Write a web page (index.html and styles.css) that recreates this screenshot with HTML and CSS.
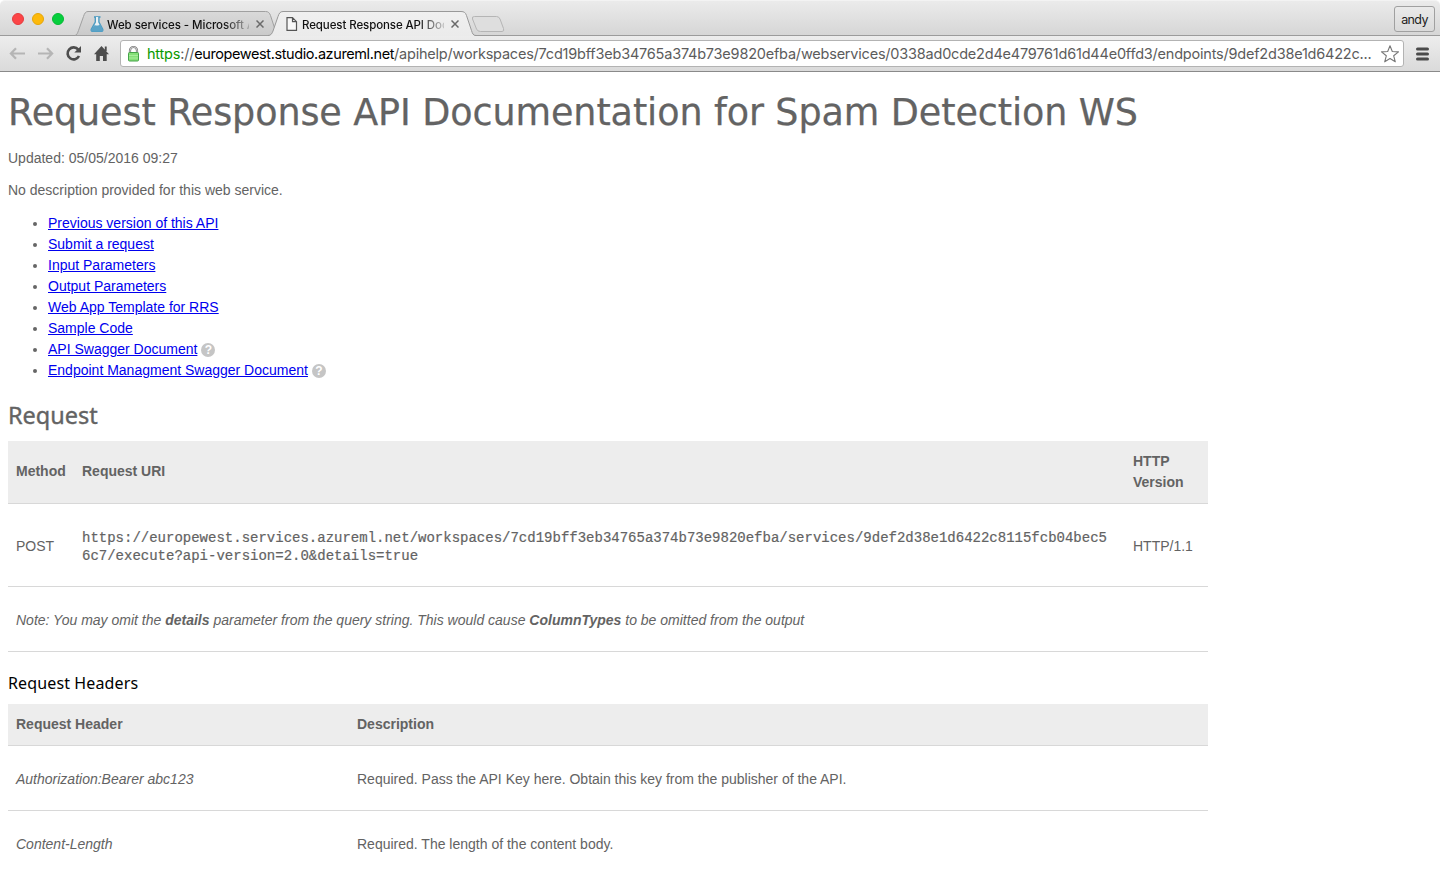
FILE: index.html
```html
<!DOCTYPE html>
<html lang="en">
<head>
<meta charset="utf-8">
<title>Request Response API Documentation</title>
<link rel="stylesheet" href="styles.css">
</head>
<body>
<header class="browser">
  <div class="tabstrip">
    <div class="lights"><i class="light red"></i><i class="light amber"></i><i class="light green"></i></div>
    <svg class="tab-shapes" width="440" height="36" viewBox="75 0 440 36">
      <defs>
        <linearGradient id="idle" x1="0" y1="0" x2="0" y2="1"><stop offset="0" stop-color="#d9d9d9"/><stop offset="1" stop-color="#cacaca"/></linearGradient>
        <linearGradient id="live" x1="0" y1="0" x2="0" y2="1"><stop offset="0" stop-color="#f0f0f0"/><stop offset="1" stop-color="#ebebeb"/></linearGradient>
      </defs>
      <path d="M75 35.5C77 35 77.500 33 78.500 30.500L83.500 16.500C84.500 13.500 85.500 11.500 88 11.500H265.500C268.500 11.500 269.500 13 270.500 15.500L277 35.500Z" fill="url(#idle)" stroke="#a0a0a0"/>
      <path d="M268 36C271 35.500 272 33.500 273 31L278 16.500C279 13.500 280 11.500 283 11.500H461C464 11.500 465.500 12.500 466.500 15.500L471.500 30.500C472.500 33.500 473 35 476 36Z" fill="url(#live)"/>
      <path d="M268 35.500C271 35.500 272 33.500 273 31L278 16.500C279 13.500 280 11.500 283 11.500H461C464 11.500 465.500 12.500 466.500 15.500L471.500 30.500C472.500 33.500 473 35.500 476 35.500" fill="none" stroke="#999"/>
      <path d="M474.500 16.500H496.500Q499 16.500 500 19L503.500 28.500Q504.500 31.500 502 31.500H480.500Q477.500 31.500 476.500 29L472.500 19Q471.500 16.500 474.500 16.500Z" fill="#dedede" stroke="#b5b5b5"/>
    </svg>
    <div class="tab tab-one">
      <svg width="14" height="16" viewBox="0 0 14 16"><path d="M4 1H10.500" stroke="#4c9bc1" stroke-width="1.600"/><path d="M5.300 1V6L1.300 13.300Q.8 15.200 2.300 15.200H11.700Q13.200 15.200 12.700 13.300L8.900 6V1" fill="#eaf1f4" stroke="#4c9bc1" stroke-width="1.400"/><path d="M4 9.500C6 8.500 7 10.800 10.300 8.500L13 14.500Q12.500 15.500 11.500 15.500H2.500L1 14Z" fill="#5aa3c7"/></svg>
      <span class="tab-title">Web services - Microsoft A</span>
      <svg class="close" width="8" height="8" viewBox="0 0 8 8"><path d="M.5 .5L7.500 7.500M7.500 .5L.5 7.500"/></svg>
    </div>
    <div class="tab tab-two">
      <svg width="12" height="14" viewBox="0 0 12 14"><path d="M1 .7H6.500L10.500 4.700V13.300H1ZM6.500 .7V4.700H10.500" fill="#f8f8f8" stroke="#555" stroke-width="1.200"/></svg>
      <span class="tab-title">Request Response API Doc</span>
      <svg class="close" width="8" height="8" viewBox="0 0 8 8"><path d="M.5 .5L7.500 7.500M7.500 .5L.5 7.500"/></svg>
    </div>
    <div class="profile">andy</div>
  </div>
  <div class="toolbar">
    <svg class="nav" width="120" height="35" viewBox="0 36 120 35">
      <g fill="none" stroke="#b5b5b5" stroke-width="2.200"><path d="M25 53.500H11.500M16 48.200L10.900 53.500L16 58.800"/><path d="M38 53.500H51.500M47 48.200L52.100 53.500L47 58.800"/></g>
      <path d="M78.300 49.600A6 6 0 1 0 79 56" fill="none" stroke="#4d4d4d" stroke-width="2.600"/><path d="M81 46V52.500H74.300Z" fill="#4d4d4d"/>
      <path d="M101.500 46L109 54.200H106.700V61H103V56H99.800V61H96.200V54.200H94ZM104.800 46.500H106.700V51H104.800Z" fill="#4d4d4d"/>
    </svg>
    <div class="address">
      <svg width="13" height="18" viewBox="0 0 13 18"><path d="M3 9V5.500A3.500 3.500 0 0 1 10 5.500V9" fill="none" stroke="#777" stroke-width="2.200"/><path d="M3 9V5.500A3.500 3.500 0 0 1 10 5.500V9" fill="none" stroke="#ddd" stroke-width=".8"/><rect x="1.500" y="7.500" width="10" height="8.500" rx="1" fill="#85df78" stroke="#45a349"/><path d="M2 10.500H11M2 13H11" stroke="#a7ee9b"/></svg>
      <span class="url"><span class="secure">https</span>://<span class="host">europewest.studio.azureml.net</span>/apihelp/workspaces/7cd19bff3eb34765a374b73e9820efba/webservices/0338ad0cde2d4e479761d61d44e0ffd3/endpoints/9def2d38e1d6422c...</span>
      <svg class="star" width="20" height="20" viewBox="0 0 20 20"><path d="M10 1.800L12.300 7.500L18.500 7.900L13.700 11.800L15.300 17.800L10 14.500L4.700 17.800L6.300 11.800L1.500 7.900L7.700 7.500Z" fill="#fff" stroke="#777" stroke-width="1.100" stroke-linejoin="round"/></svg>
    </div>
    <svg class="menu" width="13" height="14" viewBox="0 0 13 14"><path d="M1.500 2H11.500M1.500 7H11.500M1.500 12H11.500" stroke="#4a4a4a" stroke-width="3" stroke-linecap="round"/></svg>
  </div>
</header>
<main class="page">
  <h1>Request Response API Documentation for Spam Detection WS</h1>
  <p>Updated: 05/05/2016 09:27</p>
  <p>No description provided for this web service.</p>
  <ul class="links">
    <li><a href="#">Previous version of this API</a></li>
    <li><a href="#">Submit a request</a></li>
    <li><a href="#">Input Parameters</a></li>
    <li><a href="#">Output Parameters</a></li>
    <li><a href="#">Web App Template for RRS</a></li>
    <li><a href="#">Sample Code</a></li>
    <li><a href="#">API Swagger Document</a><b class="help">?</b></li>
    <li><a href="#">Endpoint Managment Swagger Document</a><b class="help">?</b></li>
  </ul>
  <h2>Request</h2>
  <table class="uri-table">
    <colgroup><col class="c-method"><col><col class="c-version"></colgroup>
    <tr class="head"><th>Method</th><th>Request URI</th><th>HTTP<br>Version</th></tr>
    <tr class="tall"><td>POST</td><td><code>https://europewest.services.azureml.net/workspaces/7cd19bff3eb34765a374b73e9820efba/services/9def2d38e1d6422c8115fcb04bec5<br>6c7/execute?api-version=2.0&amp;details=true</code></td><td>HTTP/1.1</td></tr>
    <tr><td colspan="3" class="note">Note: You may omit the <b>details</b> parameter from the query string. This would cause <b>ColumnTypes</b> to be omitted from the output</td></tr>
  </table>
  <h3>Request Headers</h3>
  <table>
    <colgroup><col class="c-header"><col></colgroup>
    <tr class="head"><th>Request Header</th><th>Description</th></tr>
    <tr><td><em>Authorization:Bearer abc123</em></td><td>Required. Pass the API Key here. Obtain this key from the publisher of the API.</td></tr>
    <tr><td><em>Content-Length</em></td><td>Required. The length of the content body.</td></tr>
  </table>
</main>
</body>
</html>
```
FILE: styles.css
```css
* { box-sizing: border-box; }
html { overflow: hidden; }
body { margin: 0; height: 873px; overflow: hidden; background: #fff; color: #636363; font: 14px/21px "Liberation Sans", Arial, sans-serif; }
svg { display: block; flex: none; }

.browser { height: 72px; }
.tabstrip { height: 36px; display: flex; position: relative; background: linear-gradient(#ebebeb, #d6d6d6); border-bottom: 1px solid #9b9b9b; border-top: 1px solid #f3f3f3; border-radius: 5px 5px 0 0; }
.lights { display: flex; gap: 8px; padding: 12px 0 0 12px; width: 90px; }
.light { width: 12px; height: 12px; border-radius: 50%; }
.red { background: #fc4547; border: 1px solid #e43c3f; }
.amber { background: #fdb90b; border: 1px solid #e5a60a; }
.green { background: #06ce3d; border: 1px solid #06b934; }
.tab-shapes { position: absolute; left: 75px; top: -1px; }
.tab { position: relative; display: flex; align-items: center; height: 24px; margin-top: 11px; font: 500 11.500px/16px Inter, sans-serif; letter-spacing: -.1px; color: #111; }
.tab-one { width: 174px; }
.tab-two { width: 180px; margin-left: 22px; }
.tab-title { white-space: nowrap; width: 142px; margin: 1px 0 0 3px; -webkit-mask-image: linear-gradient(90deg, #000 116px, transparent 148px); mask-image: linear-gradient(90deg, #000 116px, transparent 148px); }
.tab-one .tab-title { letter-spacing: -.06px; }
.tab-two .tab-title { margin-left: 4px; }
.close { margin-left: 7px; }
.close path { fill: none; stroke: #6a6a6a; stroke-width: 1.5; }
.profile { margin: 5px 5px 0 auto; width: 41px; height: 26px; border: 1px solid #a0a0a0; border-radius: 3px; background: linear-gradient(#eaeaea, #dadada); font: 12.500px/26px Inter, sans-serif; letter-spacing: -.6px; color: #222; text-align: center; }
.toolbar { height: 36px; display: flex; background: linear-gradient(#ededed, #dadada); border-bottom: 1px solid #8a8a8a; }
.address { width: 1284px; height: 27px; margin-top: 4px; display: flex; align-items: center; background: #fff; border: 1px solid #b3b3b3; border-radius: 3px; padding-left: 6px; }
.url { width: 1228px; margin-left: 7px; font: 14.500px/22px Inter, sans-serif; letter-spacing: -.21px; color: #5c5c5c; white-space: nowrap; }
.secure { color: #0a9a00; }
.host { color: #000; letter-spacing: -.4px; }
.star { margin-left: 5px; }
.menu { margin: 11px 0 0 12px; }

.page { padding: 0 8px; }
h1, h2, h3 { margin: 0; font-weight: 400; white-space: nowrap; }
h1 { height: 76px; padding-top: 17px; font: 36.500px/48px "DejaVu Sans", Verdana, sans-serif; letter-spacing: -.09px; -webkit-text-stroke: .25px #636363; }
p { margin: 0 0 11px; }
.links { margin: 12px 0 0; padding-left: 40px; list-style: none; }
.links a { color: #00e; text-decoration: underline; }
.links li { height: 21px; display: flex; align-items: center; }
.links li::before { content: ""; width: 4px; height: 4px; margin: 0 11px 0 -15px; border-radius: 50%; background: #666; }
.help { width: 14px; height: 14px; margin: 1px 0 0 4px; border-radius: 50%; background: #c5c5c5; color: #fff; font-size: 12px; line-height: 14px; text-align: center; }
h2 { height: 60px; padding-top: 17px; font: 23.500px/34px "Noto Sans", sans-serif; letter-spacing: 0; -webkit-text-stroke: .35px #636363; }
h3 { height: 52px; padding-top: 19px; font: 16px/24px "Noto Sans", sans-serif; letter-spacing: .13px; color: #000; }
table { width: 1200px; table-layout: fixed; border-collapse: separate; border-spacing: 0; }
.c-method { width: 66px; }
.c-version { width: 83px; }
.c-header { width: 341px; }
th, td { padding: 2px 8px 0; text-align: left; vertical-align: middle; border-bottom: 1px solid #d8d8d8; height: 65px; white-space: nowrap; }
th { background: #ededed; padding: 9px 8px 10px; height: 42px; }
.uri-table th { padding: 9px 8px 11px; height: 63px; }
.uri-table th:last-child { padding: 10px 8px; }
.tall td { height: 83px; }
.note { font-style: italic; }
code { display: block; padding-top: 2px; font: 14px/18px "Liberation Mono", "Courier New", monospace; -webkit-text-stroke: .2px #636363; }
```
